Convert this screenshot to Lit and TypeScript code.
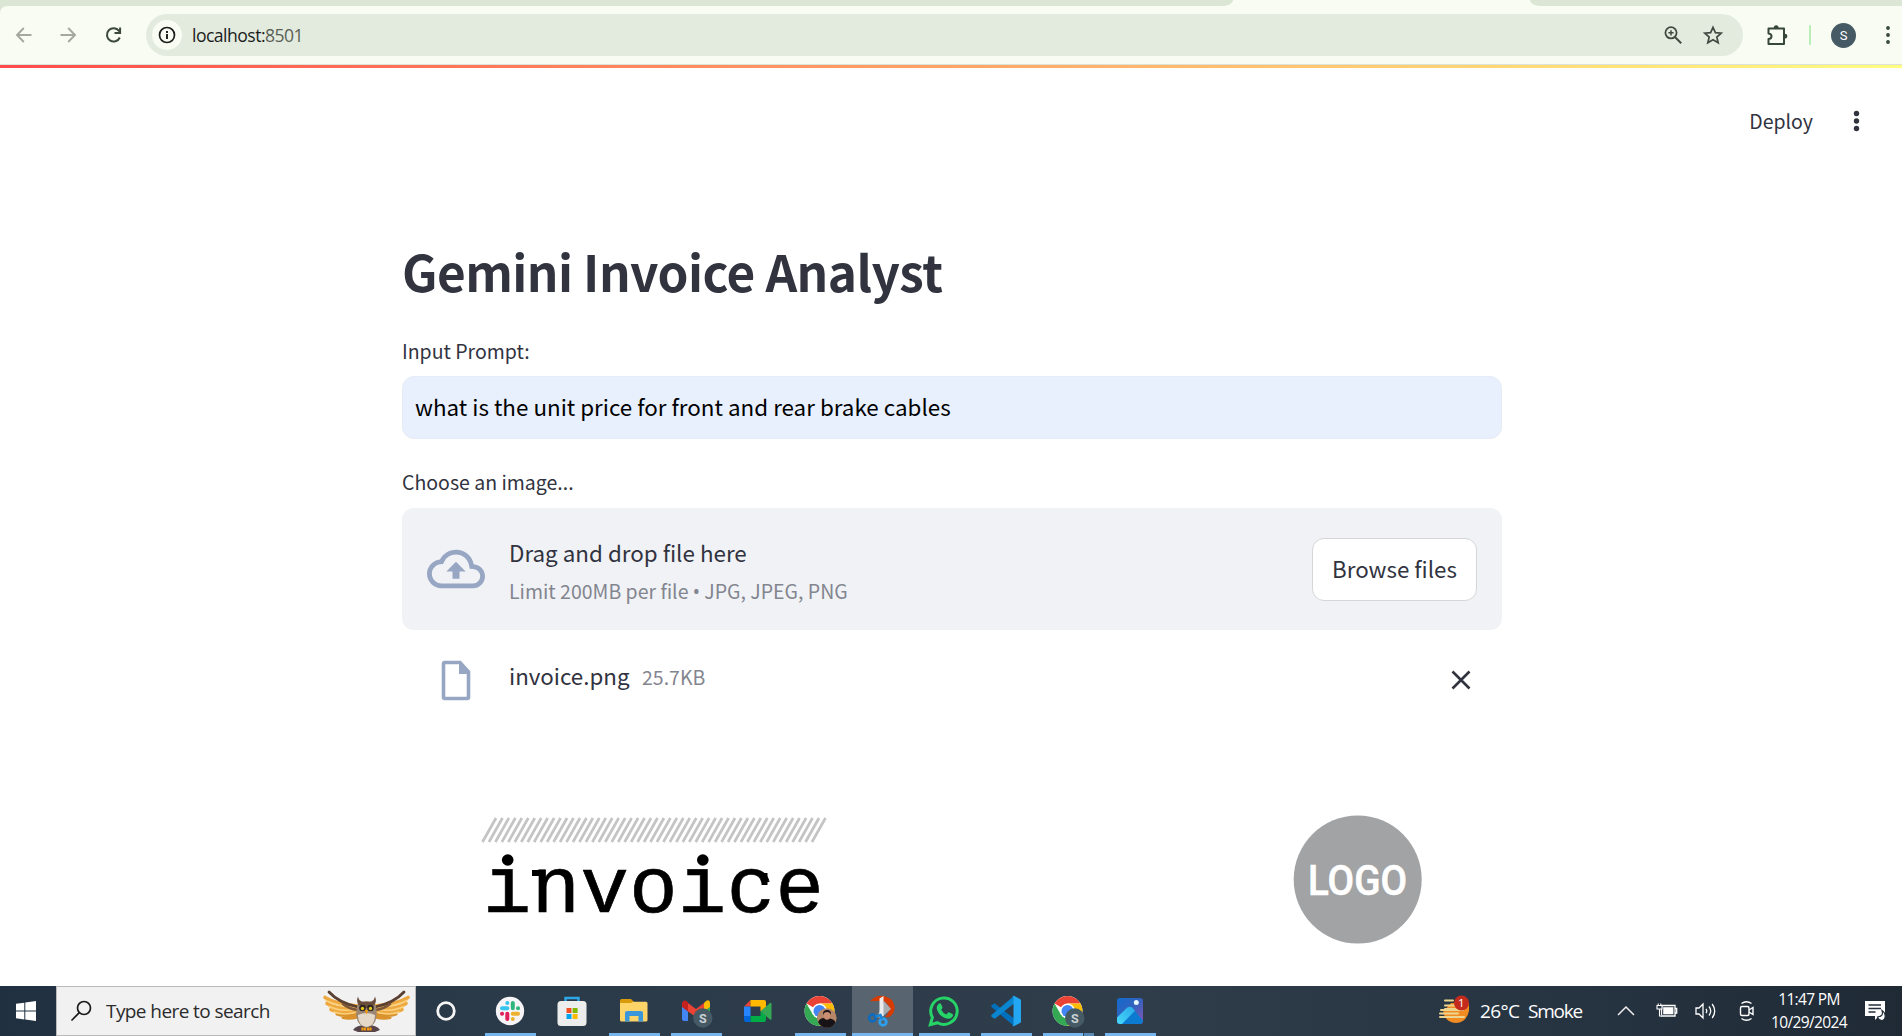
import { LitElement, html, svg, css } from "lit";
import { customElement } from "lit/decorators.js";

const chromeIcon = (inner: unknown) => html`<svg class="ico" width="34" height="34" viewBox="0 0 34 34">
  <circle cx="15.500" cy="16" r="15" fill="#fff"/>
  <path d="M15.500 16 L2.510 8.500 A15 15 0 0 1 28.490 8.500 L15.500 8.500Z" fill="#ea4335"/>
  <path d="M2.510 8.500 A15 15 0 0 0 15.500 31 L22 19.750 L15.500 16 L9 19.750Z" fill="#34a853"/>
  <path d="M28.490 8.500 A15 15 0 0 1 15.500 31 L22 19.750 L15.500 8.500Z" fill="#fbbc04"/>
  <circle cx="15.500" cy="16" r="7.500" fill="#fff"/><circle cx="15.500" cy="16" r="6" fill="#4285f4"/>
  ${inner}</svg>`;
const badge = svg`<circle cx="22.800" cy="23" r="9.700" fill="#455a64"/><text x="22.800" y="27.600" text-anchor="middle" font-family="Roboto" font-weight="700" font-size="12.500" fill="#c9d0d4">S</text>`;

const icons = {
  slack: html`<svg class="ico" width="34" height="34" viewBox="0 0 34 34"><circle cx="16" cy="16" r="14.200" fill="#f6f4f6"/>
    <g stroke-width="4" stroke-linecap="round"><path d="M13.300 8v.1M8 13.300h5.300" stroke="#36c5f0"/><path d="M18.800 8v5.300M24 13.300h.1" stroke="#2eb67d"/><path d="M18.800 18.800H24M18.800 24v.1" stroke="#ecb22e"/><path d="M13.300 18.800V24M8 18.800h.1" stroke="#e01e5a"/></g></svg>`,
  store: html`<svg class="ico" width="34" height="34" viewBox="0 0 34 34"><path d="M9.500 8V3h13v5" fill="none" stroke="#2ea7e8" stroke-width="2.400"/><rect x="1.500" y="6" width="29" height="25" rx="3.500" fill="#ededed"/><path fill="#f25022" d="M10.500 13h5v5h-5z"/><path fill="#7fba00" d="M16.600 13h5v5h-5z"/><path fill="#00a4ef" d="M10.500 19h5v5h-5z"/><path fill="#ffb900" d="M16.600 19h5v5h-5z"/></svg>`,
  files: html`<svg class="ico" width="34" height="34" viewBox="0 0 34 34"><path d="M2 5.500Q2 4 3.500 4H13l2.500 2.500V12H2z" fill="#d99a0b"/><path d="M2 8h11l2-1.300h13q1.500 0 1.500 1.500V25q0 1.500-1.500 1.500H3.500Q2 26.500 2 25z" fill="#fdd468"/><path d="M7 26.500V18q0-2 2-2h14q2 0 2 2v8.500h-4.500V21h-9v5.500z" fill="#3b97da"/></svg>`,
  gmail: html`<svg class="ico" width="34" height="34" viewBox="0 0 34 34"><path d="M2 10l6 4.500V26H4q-2 0-2-2z" fill="#4285f4"/><path d="M30 10l-6 4.500V26h4q2 0 2-2z" fill="#34a853"/><path d="M24 8l2-2q2-1.500 3.500 0Q30 7 30 9v3l-6 4.500z" fill="#fbbc04"/><path d="M8 8l8 6 8-6v8.500L16 22l-8-5.500z" fill="#ea4335"/><path d="M2 12V8q.5-2.500 3-2.500 1.500 0 3 2v9z" fill="#c5221f"/>${badge}</svg>`,
  meet: html`<svg class="ico" width="34" height="34" viewBox="0 0 34 34"><path d="M8.500 5L2 11.500h6.500z" fill="#ea4335"/><path d="M2 11.500h6.500v9.500H2z" fill="#2684fc"/><path d="M2 21h6.500v6H4q-2 0-2-2z" fill="#0066da"/><path d="M8.500 21h10v-4.500l5.500 4V25q0 2-2 2H8.500z" fill="#00ac47"/><path d="M8.500 5H22q2 0 2 2v5l-5.500 4.500v-5h-10z" fill="#ffba00"/><path d="M18.500 16.200L28 8q1.500-1 1.500.8v15q0 1.700-1.500.7z" fill="#34a853"/></svg>`,
  chromePhoto: chromeIcon(svg`<circle cx="22.800" cy="23" r="9.800" fill="#b58668"/><path d="M14 27q2-4 6-4l6 .5q5 1 5.500 4-3 5.300-8.500 5.300-6 0-9-5.800z" fill="#171316"/><ellipse cx="23" cy="20.500" rx="3.300" ry="4.300" fill="#c98e72"/><path d="M19 20q-.5-5 4-5t4 5q-1-3-4-3t-4 3z" fill="#1d1516"/>`),
  snip: html`<svg class="ico" width="34" height="34" viewBox="0 0 34 34"><path d="M4 6Q10 0 18 1q9 2 10.500 10Q29 19 23 22h-4q5-5 4-10-2-6-9-6z" fill="#d83b01"/><path d="M18 6l7 8-10 9-4-1z" fill="#a9adb2"/><path d="M13.500 3.500L17.500 1v20h-4z" fill="#e9ebed"/><circle cx="6.500" cy="23" r="3.300" fill="none" stroke="#0f6cbd" stroke-width="2.800"/><circle cx="17" cy="27" r="3.300" fill="none" stroke="#2b9ff0" stroke-width="2.800"/><path d="M9.500 21.500l5-1.500 1.500 4" stroke="#1684d8" stroke-width="2.500" fill="none"/></svg>`,
  whatsapp: html`<svg class="ico" width="34" height="34" viewBox="0 0 34 34"><path d="M2.300 29.700L4.400 22.500A13.200 13.200 0 1 1 9.600 27.700Z" fill="none" stroke="#25d366" stroke-width="3"/><path d="M10.500 9q1.500-1.500 2.500 0l1.500 3.300q.2 1-1.300 2.500 1.800 3.500 5.200 4.800l1.700-2q.6-.6 1.300-.2l3.200 1.600q.8.5 0 2.600-1.700 2.600-5 2.100Q11 22 8.800 14q-.5-3.300 1.700-5z" fill="#25d366"/></svg>`,
  vscode: html`<svg class="ico" width="34" height="34" viewBox="0 0 34 34"><path d="M1.500 10.500l2-1.700q1-.6 2 .1L24 23.500v7.500L1.500 12q-.7-.8 0-1.500z" fill="#0070bd"/><path d="M1.500 21.500l2 1.800q1 .6 2-.1L24 8.500V1L1.500 20q-.7.8 0 1.500z" fill="#0a86d1"/><path d="M22.500 1.200q.8-.6 1.800-.1l5.700 2.800q1 .5 1 1.600v21q0 1.100-1 1.600l-5.700 2.800q-1 .5-1.800-.1 1-.3 1-1.700V3q0-1.400-1-1.800z" fill="#24a7f2"/></svg>`,
  chromeS: chromeIcon(badge),
  photos: html`<svg class="ico" width="34" height="34" viewBox="0 0 34 34"><defs><linearGradient id="pa" x1="0" y1="0" x2="1" y2="1"><stop offset="0" stop-color="#0f6cce"/><stop offset=".5" stop-color="#3660bd"/><stop offset="1" stop-color="#8a55b5"/></linearGradient><linearGradient id="pb" x1="0" y1="1" x2="1" y2="0"><stop offset="0" stop-color="#48d8fa"/><stop offset="1" stop-color="#27a7e8"/></linearGradient></defs><rect x="3" y="3" width="26" height="26" rx="3" fill="url(#pa)"/><path d="M6 29l7-15q3-3 6 0l10 11.500q-.3 3.500-3 3.500z" fill="#0b7ad1"/><path d="M3 22.500l10-9.700q2.700-2.300 5.400 0l2.600 2.900L8 29H6q-3 0-3-3z" fill="url(#pb)"/><circle cx="22.300" cy="7.500" r="2.500" fill="#e8f6ff"/></svg>`,
};

const apps: { icon: unknown; state: string }[] = [
  { icon: icons.slack, state: "open" },
  { icon: icons.store, state: "" },
  { icon: icons.files, state: "open" },
  { icon: icons.gmail, state: "open" },
  { icon: icons.meet, state: "" },
  { icon: icons.chromePhoto, state: "open" },
  { icon: icons.snip, state: "active" },
  { icon: icons.whatsapp, state: "open" },
  { icon: icons.vscode, state: "open" },
  { icon: icons.chromeS, state: "open multi" },
  { icon: icons.photos, state: "open" },
];

const owlWing = () => svg`<g fill="none" stroke-linecap="round">
  <path d="M41 29Q32 31 26 29.500M41 26Q28 29 20 26" stroke="#d9922c" stroke-width="3"/>
  <path d="M41 23Q24 26 14 21.500M41 20Q20 22 10 15.500M41 18Q18 16 8 9.500" stroke="#eda93f" stroke-width="3.600"/>
  <path d="M38 24.500Q26 27.500 17 24M38 21.500Q24 24 12 18.500M38 19Q20 18.500 9 12.500" stroke="#fbd07c" stroke-width="1.500"/>
  <path d="M41 19Q22 15 12 4" stroke="#5b3f31" stroke-width="2.800"/>
  <path d="M41 22Q32 21 26 16" stroke="#7a5539" stroke-width="2.600"/>
</g>`;

@customElement("browser-bar")
class BrowserBar extends LitElement {
  static styles = css`
    :host { display: block; font-family: "Open Sans", sans-serif; }
    .tabs { height: 6px; background: #f8fcf3; display: flex; justify-content: space-between; }
    .tabs-left { width: 1233px; background: #dbe6d5; border-bottom-right-radius: 10px 6px; }
    .tabs-right { width: 372px; background: #dbe6d5; border-bottom-left-radius: 10px 6px; }
    .under { background: #dbe6d5; height: 58px; }
    .bar { height: 58px; box-sizing: border-box; background: #f8fcf3; border-top-left-radius: 7px; display: flex; align-items: center; padding: 0 4px 0 14px; }
    .nav { display: flex; gap: 25px; width: 132px; }
    .nav svg, .right svg { display: block; flex: none; }
    .pill { width: 1597px; height: 42px; border-radius: 21px; background: #e3ebdf; display: flex; align-items: center; box-sizing: border-box; padding: 0 19px 0 6px; }
    .info { width: 30px; height: 30px; border-radius: 50%; background: #f8fcf3; display: grid; place-items: center; margin-right: 10px; }
    .url { font-size: 17.600px; line-height: 24px; letter-spacing: -0.530px; color: #1b1c1a; flex: 1; }
    .port { color: #5a5f55; }
    .pill-icons { display: flex; gap: 19px; }
    .right { display: flex; align-items: center; flex: 1; }
    .puzzle { margin-left: 22px; }
    .div { width: 2px; height: 20px; background: #b9efb6; margin-left: 20px; border-radius: 1px; }
    .avatar { width: 25px; height: 25px; border-radius: 50%; background: #455a64; color: #fff; font: 13px/25px Roboto, sans-serif; text-align: center; margin-left: 20px; }
    .dots { margin-left: 28px; }
    .line { height: 1px; background: #dce3d9; }
  `;
  render() {
    return html`
      <div class="tabs"><div class="tabs-left"></div><div class="tabs-right"></div></div>
      <div class="under"><div class="bar">
        <div class="nav">
          <svg width="20" height="20" viewBox="0 0 20 20" fill="none" stroke="#a3a9a0" stroke-width="1.900"><path d="M17.500 10H3.500M9.800 3L3 10l6.800 7"/></svg>
          <svg width="20" height="20" viewBox="0 0 20 20" fill="none" stroke="#a3a9a0" stroke-width="1.900"><path d="M1.500 10h14M9.200 3L16 10l-6.800 7"/></svg>
          <svg width="20" height="20" viewBox="0 0 20 20" fill="none" stroke="#3d4a3b" stroke-width="2"><path d="M15.800 12.500A6.700 6.700 0 1 1 15 5.800L16 7.200M16.100 2.600V8H10.500"/></svg>
        </div>
        <div class="pill">
          <div class="info"><svg width="18" height="18" viewBox="0 0 18 18"><circle cx="9" cy="9" r="7.500" fill="none" stroke="#1b1c1a" stroke-width="1.700"/><path d="M9 8v5M9 5v1.900" stroke="#1b1c1a" stroke-width="1.900"/></svg></div>
          <div class="url">localhost:<span class="port">8501</span></div>
          <div class="pill-icons">
            <svg width="20" height="20" viewBox="0 0 20 20" fill="none" stroke="#434941"><circle cx="8" cy="7.800" r="5.600" stroke-width="1.800"/><path d="M12.200 12.200l6 6" stroke-width="2"/><path d="M8 5.200v5.200M5.400 7.800h5.200" stroke-width="1.500"/></svg>
            <svg width="22" height="20" viewBox="0 0 22 20" fill="none" stroke="#434941" stroke-width="1.700"><path d="M11 2.400l2.400 5.300 5.800.5-4.400 3.800 1.400 5.700L11 14.700l-5.200 3 1.400-5.700L2.800 8.200l5.800-.5z"/></svg>
          </div>
        </div>
        <div class="right">
          <svg class="puzzle" width="24" height="24" viewBox="0 0 24 24"><path d="M3.500 5.500h15.500v15.500H3.500v-5q3-.3 3-2.800t-3-2.800z" fill="none" stroke="#37473a" stroke-width="2" stroke-linejoin="round"/><path d="M8.800 5a2.400 2.800 0 0 1 4.800 0zM19.500 10.800a2.800 2.400 0 0 1 0 4.800z" fill="#37473a"/></svg>
          <div class="div"></div><div class="avatar">S</div>
          <svg class="dots" width="8" height="20" viewBox="0 0 8 20" fill="#37473a"><circle cx="4" cy="3" r="1.900"/><circle cx="4" cy="10" r="1.900"/><circle cx="4" cy="17" r="1.900"/></svg>
        </div>
      </div></div>
      <div class="line"></div>`;
  }
}

@customElement("invoice-app")
class InvoiceApp extends LitElement {
  static styles = css`
    :host { display: block; height: 918px; background: #fff; overflow: hidden; font-family: "Noto Sans CJK SC", "Noto Sans", sans-serif; color: #31333f; border-top: 3px solid transparent; border-image: linear-gradient(90deg, #ff4b4b, #fffd80) 3 0 0 0; }
    .head { height: 106px; display: flex; justify-content: flex-end; align-items: center; gap: 37px; padding-right: 39px; }
    .deploy { font-size: 19.500px; line-height: 30px; }
    .head svg { display: block; }
    .main { width: 1100px; margin-left: 402px; }
    h1 { margin: 0; padding-top: 61px; font-size: 49.500px; line-height: 72px; font-weight: 700; height: 102px; white-space: nowrap; letter-spacing: -0.560px; }
    .label { font-size: 19.500px; line-height: 28px; height: 39px; }
    .label.up { line-height: 26px; }
    .input { height: 63px; box-sizing: border-box; border: 1px solid #e6ecf5; border-radius: 12px; background: #e8f0fe; color: #000; font-size: 22.400px; line-height: 58px; padding-left: 12px; white-space: nowrap; }
    .gap { height: 30px; }
    .drop { height: 122px; border-radius: 12px; background: #f0f2f6; box-sizing: border-box; padding: 0 25px; display: flex; align-items: center; }
    .texts { flex: 1; margin-left: 24px; padding-top: 5px; }
    .t1 { font-size: 22.400px; line-height: 38px; }
    .t2 { font-size: 19.500px; line-height: 40px; color: #83858f; }
    .bullet { font-family: "Noto Sans", sans-serif; font-size: 19px; line-height: 1; }
    .browse { width: 165px; height: 63px; box-sizing: border-box; border: 1px solid #d6d6d9; border-radius: 12px; background: #fff; font-size: 22.350px; line-height: 59px; text-align: center; white-space: nowrap; }
    .file { height: 100px; box-sizing: border-box; display: flex; align-items: center; padding: 0 29px 0 33px; }
    .fname { font-size: 22.350px; line-height: 36px; margin-left: 32px; margin-top: -11px; width: 133px; }
    .size { font-size: 19.500px; line-height: 36px; color: #83858f; flex: 1; margin-top: -6px; }
    .paper { display: block; }
    .word { font-family: "Liberation Mono", monospace; font-size: 80.500px; letter-spacing: .45px; }
    .logo { font-family: Roboto, sans-serif; font-weight: 500; font-size: 42px; }
  `;
  render() {
    const hatch = Array.from({ length: 52 }, (_, i) => {
      const x = 80.5 + i * 6.46;
      return svg`<path d="M${x} 88L${x + 13.5} 64"/>`;
    });
    return html`
      <div class="head"><div class="deploy">Deploy</div>
        <svg width="13" height="26" viewBox="0 0 13 26" fill="#31333f"><circle cx="6.500" cy="5.500" r="2.700"/><circle cx="6.500" cy="13" r="2.700"/><circle cx="6.500" cy="20.500" r="2.700"/></svg></div>
      <div class="main">
        <h1>Gemini Invoice Analyst</h1>
        <div class="label">Input Prompt:</div>
        <div class="input">what is the unit price for front and rear brake cables</div>
        <div class="gap"></div>
        <div class="label up">Choose an image...</div>
        <div class="drop">
          <svg width="58" height="58" viewBox="0 0 24 24" fill="#97a6c3"><path d="M19.350 10.040A7.490 7.490 0 0012 4C9.110 4 6.600 5.640 5.350 8.040A5.994 5.994 0 000 14c0 3.310 2.690 6 6 6h13c2.760 0 5-2.240 5-5 0-2.640-2.050-4.780-4.650-4.960zM19 18H6c-2.210 0-4-1.790-4-4 0-2.050 1.530-3.760 3.560-3.970l1.070-.110.500-.950A5.469 5.469 0 0112 6c2.620 0 4.880 1.860 5.390 4.430l.300 1.500 1.530.110A2.980 2.980 0 0122 15c0 1.650-1.350 3-3 3zM8 13h2.550v3h2.900v-3H16l-4-4z"/></svg>
          <div class="texts"><div class="t1">Drag and drop file here</div><div class="t2">Limit 200MB per file <span class="bullet">•</span> JPG, JPEG, PNG</div></div>
          <div class="browse">Browse files</div>
        </div>
        <div class="file">
          <svg width="42" height="46" viewBox="0 0 42 46"><path d="M9 5.500H25l8.500 9.500V40a1.500 1.500 0 0 1-1.500 1.500H10A1.500 1.500 0 0 1 8.500 40V7A1.500 1.500 0 0 1 10 5.500z" fill="none" stroke="#97a6c3" stroke-width="3.600"/><path d="M24 4.500L35 17H24z" fill="#97a6c3"/></svg>
          <div class="fname">invoice.png</div><div class="size">25.7KB</div>
          <svg width="24" height="24" viewBox="0 0 24 24" fill="none" stroke="#31333f" stroke-width="2.600"><path d="M3.500 3.500l17 17M20.500 3.500l-17 17"/></svg>
        </div>
        <svg class="paper" width="1100" height="256" viewBox="0 -24 1100 256">
          <g stroke="#c4c4c4" stroke-width="2.700">${hatch}</g>
          <text class="word" x="81" y="157.500" stroke="#000" stroke-width=".7">invoice</text>
          <path d="M92 92h26v19H92zM287 92h26v19h-26z" fill="#fff"/>
          <circle cx="105.700" cy="106" r="5.800"/><circle cx="300.800" cy="106" r="5.800"/>
          <path d="M130 116h11v6h-11zM359.500 119h6v12h-6z"/>
          <circle cx="955.700" cy="125.500" r="64" fill="#a2a3a5"/>
          <text class="logo" x="906" y="140.500" textLength="99" lengthAdjust="spacingAndGlyphs" fill="#fff" stroke="#fff" stroke-width=".6">LOGO</text>
        </svg>
      </div>`;
  }
}

@customElement("task-bar")
class TaskBar extends LitElement {
  static styles = css`
    :host { display: flex; height: 50px; background: linear-gradient(90deg, #203040 0, #2b3a49 25%, #2f3d4b 60%, #283644 78%, #1f2a35 100%); color: #fff; font-family: "Open Sans", sans-serif; }
    svg { display: block; flex: none; }
    .start { width: 56px; display: grid; place-items: center; box-sizing: border-box; padding-right: 4px; }
    .search { width: 360px; box-sizing: border-box; border: 1px solid #b9b9b9; background: #f1f1f1; display: flex; align-items: center; padding-left: 13px; }
    .hint { color: #2b2b2b; font-size: 19px; letter-spacing: -0.580px; margin-left: 14px; width: 212px; white-space: nowrap; }
    .cortana { width: 63.500px; display: grid; place-items: center; box-sizing: border-box; padding-right: 3px; }
    .app { width: 62px; display: grid; grid-template-rows: 47px 3px; justify-items: center; }
    .ico { margin-top: 9px; margin-left: 1px; }
    .mark { width: 51px; height: 3px; }
    .open .mark { background: #76b4ee; }
    .multi .mark { background: linear-gradient(90deg, #76b4ee 40px, #33475b 40px 41px, #5a8ab8 41px); }
    .active { background: #586470; width: 61px; margin-left: .5px; margin-right: .5px; }
    .active .mark { background: #76b4ee; width: 61px; }
    .tray { display: flex; align-items: center; margin-left: 277.500px; }
    .temp { font-size: 19px; letter-spacing: -0.6px; margin-left: 9px; white-space: nowrap; width: 48px; }
    .smoke { font-size: 19px; letter-spacing: -1.200px; width: 88px; }
    .battery { margin-left: 20px; }
    .sound { margin-left: 17px; }
    .meet { margin-left: 21px; }
    .clock { font-size: 15.500px; letter-spacing: -0.650px; line-height: 23px; text-align: center; width: 90px; margin-left: 8px; }
    .notes { margin-left: 10px; }
  `;
  render() {
    return html`
      <div class="start"><svg width="20" height="20" viewBox="0 0 20 20" fill="#fff"><path d="M0 2.800L8.300 1.700V9.500H0zM9.300 1.500L20 0v9.500H9.300zM0 10.500h8.300v7.900L0 17.200zM9.300 10.500H20V20L9.300 18.500z"/></svg></div>
      <div class="search">
        <svg width="22" height="22" viewBox="0 0 22 22" fill="none" stroke="#1a1a1a" stroke-width="1.700"><circle cx="14" cy="8" r="6.500"/><path d="M9.300 12.700L1.500 20.500"/></svg>
        <div class="hint">Type here to search</div>
        <svg width="94" height="46" viewBox="1 0 94 46">
          ${owlWing()}<g transform="matrix(-1 0 0 1 99 0)">${owlWing()}</g>
          <path d="M36 42q3-5 13.500-5T63 42l-5 2H41z" fill="#57444a"/>
          <path d="M39.500 22q0-9 10-9t10 9q1.500 16-10 17.500Q38 38 39.500 22z" fill="#9b8674"/>
          <path d="M41 27q8.500-4 17 0 0 11-8.500 12Q41 38 41 27z" fill="#e4d9c8"/>
          <path d="M41.500 17q-2.500-4-.5-8.500 1 4.500 5 5.500h7q4-1 5-5.500 2 4.500-.5 8.500l-8 3z" fill="#6b4d3c"/>
          <circle cx="45.500" cy="20" r="3.300" fill="#2b2420"/><circle cx="53.500" cy="20" r="3.300" fill="#2b2420"/><circle cx="45.500" cy="20.500" r="1.700" fill="#e3c31c"/><circle cx="53.500" cy="20.500" r="1.700" fill="#e3c31c"/><path d="M47.800 22h3.400l-1.700 5z" fill="#f39c12"/>
          <path d="M45.500 39.500v3M48 39.500v3M51 39.500v3M53.500 39.500v3" stroke="#f39c12" stroke-width="2.200"/>
        </svg>
      </div>
      <div class="cortana"><svg width="22" height="22" viewBox="0 0 22 22"><circle cx="11" cy="11" r="8.300" fill="none" stroke="#f5f5f5" stroke-width="2.800"/></svg></div>
      ${apps.map((a) => html`<div class="app ${a.state}">${a.icon}<div class="mark"></div></div>`)}
      <div class="tray">
        <svg width="32" height="34" viewBox="0 0 32 34"><path d="M4 18q3 11 13 11t13-12V9H12z" fill="#f08c22"/><path d="M6 6.500h8M6 11.500h14M2 16h22M1 19.500h18M6 15h16M1 23h24" stroke="#edd590" stroke-width="2" stroke-linecap="round"/><circle cx="22.500" cy="9" r="7.500" fill="#c42b1c"/><text x="22.300" y="13" text-anchor="middle" font-size="11.500" fill="#fff">1</text></svg>
        <div class="temp">26°C</div><div class="smoke">Smoke</div>
        <svg width="20" height="20" viewBox="0 0 20 20" fill="none" stroke="#f0f0f0" stroke-width="1.500"><path d="M2 14l8-8 8 8"/></svg>
        <svg class="battery" width="22" height="20" viewBox="0 0 22 20"><path d="M5.500 4.500H19v10.500H5.500zM19 7.500h1.700v4.500h-1.700" fill="none" stroke="#fff" stroke-width="1.300"/><path d="M7.200 6.200h10.200v7.100H7.200z" fill="#fff"/><path d="M1 4.500h5v3.500H1zM2.200 2.500v2M4.800 2.500v2M3.500 8v7h2" stroke="#fff" fill="#2a3846" stroke-width="1.100"/></svg>
        <svg class="sound" width="22" height="20" viewBox="0 0 22 20" fill="none" stroke="#fff" stroke-width="1.300"><path d="M1 7h3l4-4v14l-4-4H1zM11 8q1.500 2 0 4M14 5.500q3.500 4.500 0 9M17.200 3q5 7 0 14"/></svg>
        <svg class="meet" width="18" height="22" viewBox="0 0 18 22" fill="none" stroke="#fff" stroke-width="1.400"><rect x="2.500" y="6.500" width="8.500" height="9" rx="1.500"/><path d="M11 10l4-2.500v7L11 12M3.500 3.500q5-3.500 10 0M3.500 18.500q5 3.500 10 0"/></svg>
        <div class="clock">11:47 PM<br>10/29/2024</div>
        <svg class="notes" width="22" height="22" viewBox="0 0 22 22"><path d="M1 1h20v15H15l-4 4v-4H1z" fill="#fff"/><path d="M4.500 5h12.500M4.500 8.500h12.500M4.500 12h7" stroke="#24303c" stroke-width="1.300"/><path d="M18 10.500q2 6-4.500 6.500 1 3.500 4.500 3.500 3-.5 3.200-4 0-4-3.200-6z" fill="#fff" stroke="#24303c" stroke-width="1.200"/></svg>
      </div>`;
  }
}

@customElement("app-root")
class AppRoot extends LitElement {
  static styles = css`
    :host { display: block; width: 1902px; height: 1036px; overflow: hidden; background: #fff; }
  `;
  render() {
    return html`<browser-bar></browser-bar><invoice-app></invoice-app><task-bar></task-bar>`;
  }
}
